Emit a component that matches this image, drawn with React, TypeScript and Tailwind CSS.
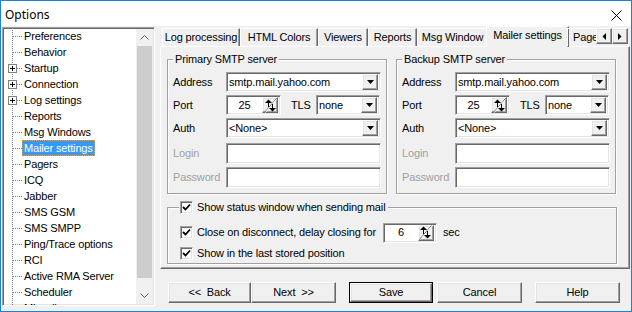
import React from 'react';

const sunken =
  'border border-t-[#a0a0a0] border-l-[#a0a0a0] border-b-white border-r-white shadow-[inset_1px_1px_0_#696969,inset_-1px_-1px_0_#e3e3e3]';
const raised =
  'border border-t-white border-l-white border-b-[#696969] border-r-[#696969] shadow-[inset_-1px_-1px_0_#a0a0a0,inset_1px_1px_0_#e3e3e3]';
const etched = 'border border-[#a0a0a0] shadow-[inset_1px_1px_0_#fff,1px_1px_0_#fff]';

const treeItems: { label: string; plus?: boolean; selected?: boolean }[] = [
  { label: 'Preferences' },
  { label: 'Behavior' },
  { label: 'Startup', plus: true },
  { label: 'Connection', plus: true },
  { label: 'Log settings', plus: true },
  { label: 'Reports' },
  { label: 'Msg Windows' },
  { label: 'Mailer settings', selected: true },
  { label: 'Pagers' },
  { label: 'ICQ' },
  { label: 'Jabber' },
  { label: 'SMS GSM' },
  { label: 'SMS SMPP' },
  { label: 'Ping/Trace options' },
  { label: 'RCI' },
  { label: 'Active RMA Server' },
  { label: 'Scheduler' },
  { label: 'Miscellaneous' },
];

const tabs = [
  { label: 'Log processing', w: 'w-[78px]' },
  { label: 'HTML Colors', w: 'w-[78px]' },
  { label: 'Viewers', w: 'w-[50px]' },
  { label: 'Reports', w: 'w-[49px]' },
  { label: 'Msg Window', w: 'w-[71px]' },
];

const DropArrow = () => (
  <svg width="7" height="4" viewBox="0 0 7 4">
    <path d="M0 0h7l-3.5 4z" fill="#000" />
  </svg>
);

const Combo = ({ value, w }: { value: string; w: string }) => (
  <div className={`${w} h-[20px] bg-white flex items-center pl-[2px] pr-[2px] ${sunken}`}>
    <span className="flex-1 whitespace-nowrap overflow-hidden">{value}</span>
    <div className={`w-[16px] h-[16px] shrink-0 bg-[#f0f0f0] flex items-center justify-center ${raised}`}>
      <DropArrow />
    </div>
  </div>
);

const SpinGlyph = () => (
  <svg width="13" height="15" viewBox="0 0 13 15">
    <path d="M0.5 14.5L12.5 0.5" stroke="#696969" />
    <path d="M1.5 14.5L12.5 1.5" stroke="#fff" />
    <path d="M1 5h7L4.5 1.5z" fill="#000" />
    <path d="M4 5h1v4H4z" fill="#000" />
    <path d="M5 10h7l-3.5 3.5z" fill="#000" />
    <path d="M8 6h1v4H8z" fill="#000" />
  </svg>
);

const Spin = ({ value, w }: { value: string; w: string }) => (
  <div className={`${w} h-[20px] bg-white flex items-center pr-[2px] ${sunken}`}>
    <span className="flex-1 text-center">{value}</span>
    <div className={`w-[16px] h-[16px] shrink-0 bg-[#f0f0f0] flex items-center justify-center ${raised}`}>
      <SpinGlyph />
    </div>
  </div>
);

const Edit = () => <div className={`w-[155px] h-[21px] bg-white ${sunken}`} />;

const Check = () => (
  <div className={`w-[13px] h-[13px] bg-white shrink-0 flex items-center justify-center ${sunken}`}>
    <svg width="9" height="9" viewBox="0 0 9 9">
      <path d="M1 4l2.5 2.5L8 1.5" stroke="#000" strokeWidth="1.8" fill="none" />
    </svg>
  </div>
);

const ServerGroup = ({ title }: { title: string }) => (
  <div className={`relative w-[220px] h-[135px] pt-[12px] pl-[5px] ${etched}`}>
    <span className="absolute -top-[7px] left-[5px] px-[2px] bg-[#f0f0f0] leading-[13px]">{title}</span>
    <div className="flex items-center h-[20px]">
      <span className="w-[53px]">Address</span>
      <Combo value="smtp.mail.yahoo.com" w="w-[155px]" />
    </div>
    <div className="flex items-center h-[20px] mt-[3px]">
      <span className="w-[53px]">Port</span>
      <Spin value="25" w="w-[55px]" />
      <span className="ml-[10px] w-[25px]">TLS</span>
      <Combo value="none" w="w-[64px]" />
    </div>
    <div className="flex items-center h-[20px] mt-[3px]">
      <span className="w-[53px]">Auth</span>
      <Combo value="<None>" w="w-[155px]" />
    </div>
    <div className="flex items-center h-[21px] mt-[5px]">
      <span className="w-[53px] text-[#a0a0a0]">Login</span>
      <Edit />
    </div>
    <div className="flex items-center h-[21px] mt-[3px]">
      <span className="w-[53px] text-[#a0a0a0]">Password</span>
      <Edit />
    </div>
  </div>
);

const Button = ({ label, w, def }: { label: string; w: string; def?: boolean }) => (
  <div className={`${w} h-[21px] ${def ? 'border border-black' : ''}`}>
    <div className={`w-full h-full flex items-center justify-center whitespace-pre ${raised}`}>{label}</div>
  </div>
);

export default function App() {
  return (
    <div className="w-[632px] h-[312px] border border-[#1883d7] bg-[#f0f0f0] flex flex-col font-['Liberation_Sans',Arial,sans-serif] text-[11px] tracking-[-0.15px] text-black leading-[13px] overflow-hidden">
      <div className="h-[25px] bg-white flex items-center pl-[4px] shrink-0 tracking-normal">
        <span className="font-['Noto_Sans',sans-serif] text-[12px] mt-[1px]">Options</span>
        <svg width="11" height="11" viewBox="0 0 11 11" className="ml-auto mr-[9px] mt-[3px]">
          <path d="M0.5 0.5L10.5 10.5M10.5 0.5L0.5 10.5" stroke="#000" />
        </svg>
      </div>
      <div className="flex flex-1">
        <div className={`ml-[1px] mt-[1px] w-[153px] h-[279px] bg-white flex overflow-hidden ${sunken}`}>
          <div className="flex-1 pl-[1px] overflow-hidden">
            {treeItems.map((it) => (
              <div key={it.label} className="flex h-[16px] items-center whitespace-nowrap">
                <svg width="18" height="16" className="shrink-0">
                  <path d="M8.5 0V16" stroke="#808080" strokeDasharray="1 1" />
                  <path d="M9 8.5H18" stroke="#808080" strokeDasharray="1 1" />
                  {it.plus && (
                    <>
                      <rect x="4.5" y="4.5" width="8" height="8" fill="#fff" stroke="#808080" />
                      <path d="M6 8.5h5M8.5 6v5" stroke="#000" />
                    </>
                  )}
                </svg>
                <span
                  className={
                    it.selected
                      ? 'h-[16px] flex items-center px-[2px] bg-[#3399ff] text-white outline outline-1 outline-dotted outline-[#f0a030] -outline-offset-1'
                      : 'px-[2px]'
                  }
                >
                  {it.label}
                </span>
              </div>
            ))}
          </div>
          <div className="w-[17px] mr-[1px] my-[1px] bg-[#f0f0f0] flex flex-col">
            <div className="h-[17px] flex items-center justify-center">
              <svg width="9" height="5" viewBox="0 0 9 5">
                <path d="M0.5 4.5L4.5 0.5L8.5 4.5" stroke="#606060" fill="none" />
              </svg>
            </div>
            <div className="h-[232px] mx-[1px] bg-[#cdcdcd]" />
            <div className="flex-1" />
            <div className="h-[17px] flex items-center justify-center">
              <svg width="9" height="5" viewBox="0 0 9 5">
                <path d="M0.5 0.5L4.5 4.5L8.5 0.5" stroke="#606060" fill="none" />
              </svg>
            </div>
          </div>
        </div>

        <div className="ml-[5px] w-[470px] flex flex-col">
          <div className="h-[20px] flex items-end pl-[2px] relative z-10">
            {tabs.map((t) => (
              <div
                key={t.label}
                className={`${t.w} h-[18px] flex items-center justify-center border-t border-l border-white border-r border-r-[#696969] shadow-[inset_-1px_0_0_#a0a0a0] whitespace-nowrap`}
              >
                {t.label}
              </div>
            ))}
            <div className="w-[83px] -mx-[2px] h-[21px] -mb-[1px] pb-[3px] flex items-center justify-center bg-[#f0f0f0] border-t border-l border-white border-r border-r-[#696969] shadow-[inset_-1px_0_0_#a0a0a0] whitespace-nowrap">
              Mailer settings
            </div>
            <div className="w-[29px] h-[18px] flex items-center pl-[5px] border-t border-l border-white overflow-hidden whitespace-nowrap">
              Pagers
            </div>
            <div className="flex mb-[2px] self-end">
              <div className={`w-[16px] h-[16px] bg-[#f0f0f0] flex items-center justify-center ${raised}`}>
                <svg width="4" height="7" viewBox="0 0 4 7">
                  <path d="M4 0v7L0.5 3.5z" fill="#000" />
                </svg>
              </div>
              <div className={`w-[16px] h-[16px] bg-[#f0f0f0] flex items-center justify-center ${raised}`}>
                <svg width="4" height="7" viewBox="0 0 4 7">
                  <path d="M0 0v7l3.5-3.5z" fill="#000" />
                </svg>
              </div>
            </div>
          </div>

          <div className="h-[223px] pl-[6px] pt-[12px] border border-t-white border-l-white border-b-[#696969] border-r-[#696969] shadow-[inset_-1px_-1px_0_#a0a0a0]">
            <div className="flex gap-[9px]">
              <ServerGroup title="Primary SMTP server" />
              <ServerGroup title="Backup SMTP server" />
            </div>
            <div className={`relative mt-[13px] w-[450px] h-[57px] pl-[12px] pt-[15px] ${etched}`}>
              <div className="absolute -top-[8px] left-[11px] px-[1px] h-[14px] bg-[#f0f0f0] flex items-center gap-[4px]">
                <Check />
                <span className="pr-[2px]">Show status window when sending mail</span>
              </div>
              <div className="flex items-center h-[19px]">
                <Check />
                <span className="ml-[4px]">Close on disconnect, delay closing for</span>
                <div className="ml-[7px]">
                  <Spin value="6" w="w-[54px]" />
                </div>
                <span className="ml-[6px]">sec</span>
              </div>
              <div className="flex items-center h-[14px] mt-[4px]">
                <Check />
                <span className="ml-[4px]">Show in the last stored position</span>
              </div>
            </div>
          </div>

          <div className="flex mt-[13px] ml-[8px]">
            <Button label="<<  Back" w="w-[83px]" />
            <Button label="Next  >>" w="w-[85px]" />
            <div className="ml-[13px]">
              <Button label="Save" w="w-[84px]" def />
            </div>
            <div className="ml-[4px]">
              <Button label="Cancel" w="w-[85px]" />
            </div>
            <div className="ml-[13px]">
              <Button label="Help" w="w-[85px]" />
            </div>
          </div>
        </div>
      </div>
    </div>
  );
}
